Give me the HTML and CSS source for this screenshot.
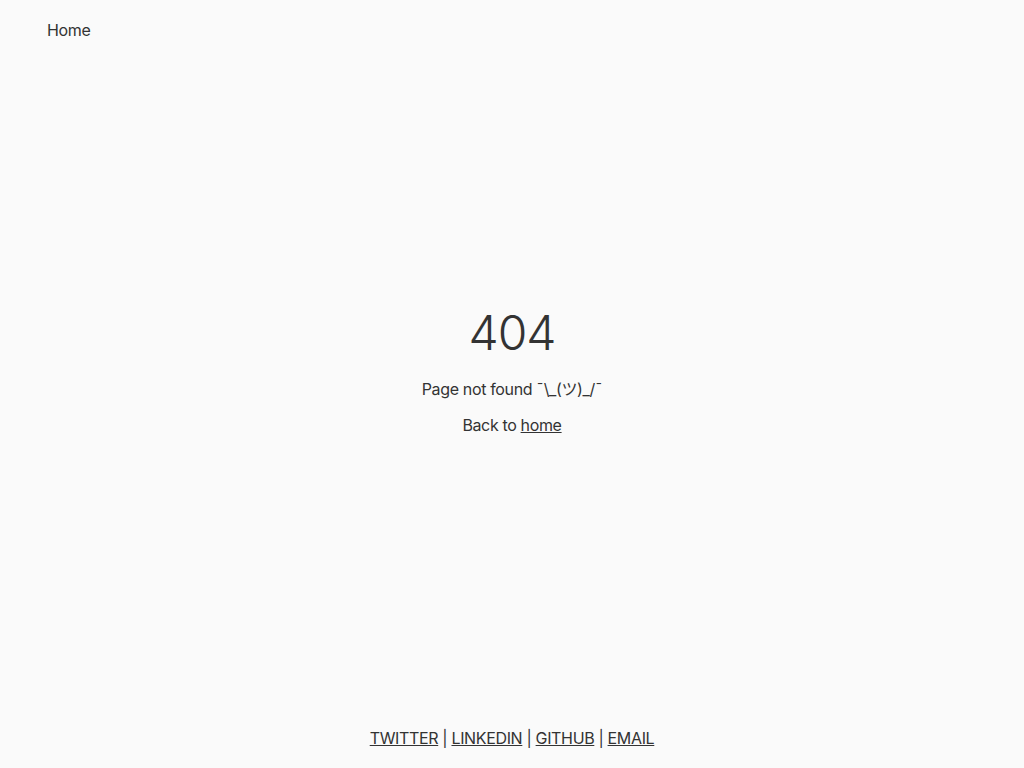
FILE: index.html
```html
<!DOCTYPE html>
<html lang="en">
<head>
<meta charset="utf-8">
<title>404</title>
<link rel="stylesheet" href="styles.css">
</head>
<body>
<div class="page">
  <header class="nav">
    <a class="nav-link" href="#">Home</a>
  </header>
  <main class="main">
    <h1 class="code">404</h1>
    <p class="msg">Page not found ¯\_(ツ)_/¯</p>
    <p class="back">Back to <a href="#">home</a></p>
  </main>
  <footer class="footer">
    <a href="#">TWITTER</a> | <a href="#">LINKEDIN</a> | <a href="#">GITHUB</a> | <a href="#">EMAIL</a>
  </footer>
</div>
</body>
</html>
```

FILE: styles.css
```css
html, body {
  margin: 0;
  padding: 0;
  background: #fafafa;
  color: #333;
  font-family: Inter, "Noto Sans CJK JP", sans-serif;
  font-size: 16px;
  letter-spacing: -0.022em;
}
a { color: #333; }
.page {
  min-height: 100vh;
  display: flex;
  flex-direction: column;
}
.nav {
  padding: 20px 47px;
  line-height: 20px;
}
.nav-link { text-decoration: none; }
.main {
  flex: 1;
  display: flex;
  flex-direction: column;
  align-items: center;
  justify-content: center;
  text-align: center;
  padding-bottom: 50px;
}
.code {
  font-size: 48px;
  font-weight: 300;
  margin: 0;
  line-height: 60px;
  letter-spacing: -0.02em;
}
.msg { margin: 16px 0 0; line-height: 20px; }
.back { margin: 16px 0 0; line-height: 20px; }
.footer {
  text-align: center;
  padding: 0 0 20px;
  line-height: 20px;
}
```
